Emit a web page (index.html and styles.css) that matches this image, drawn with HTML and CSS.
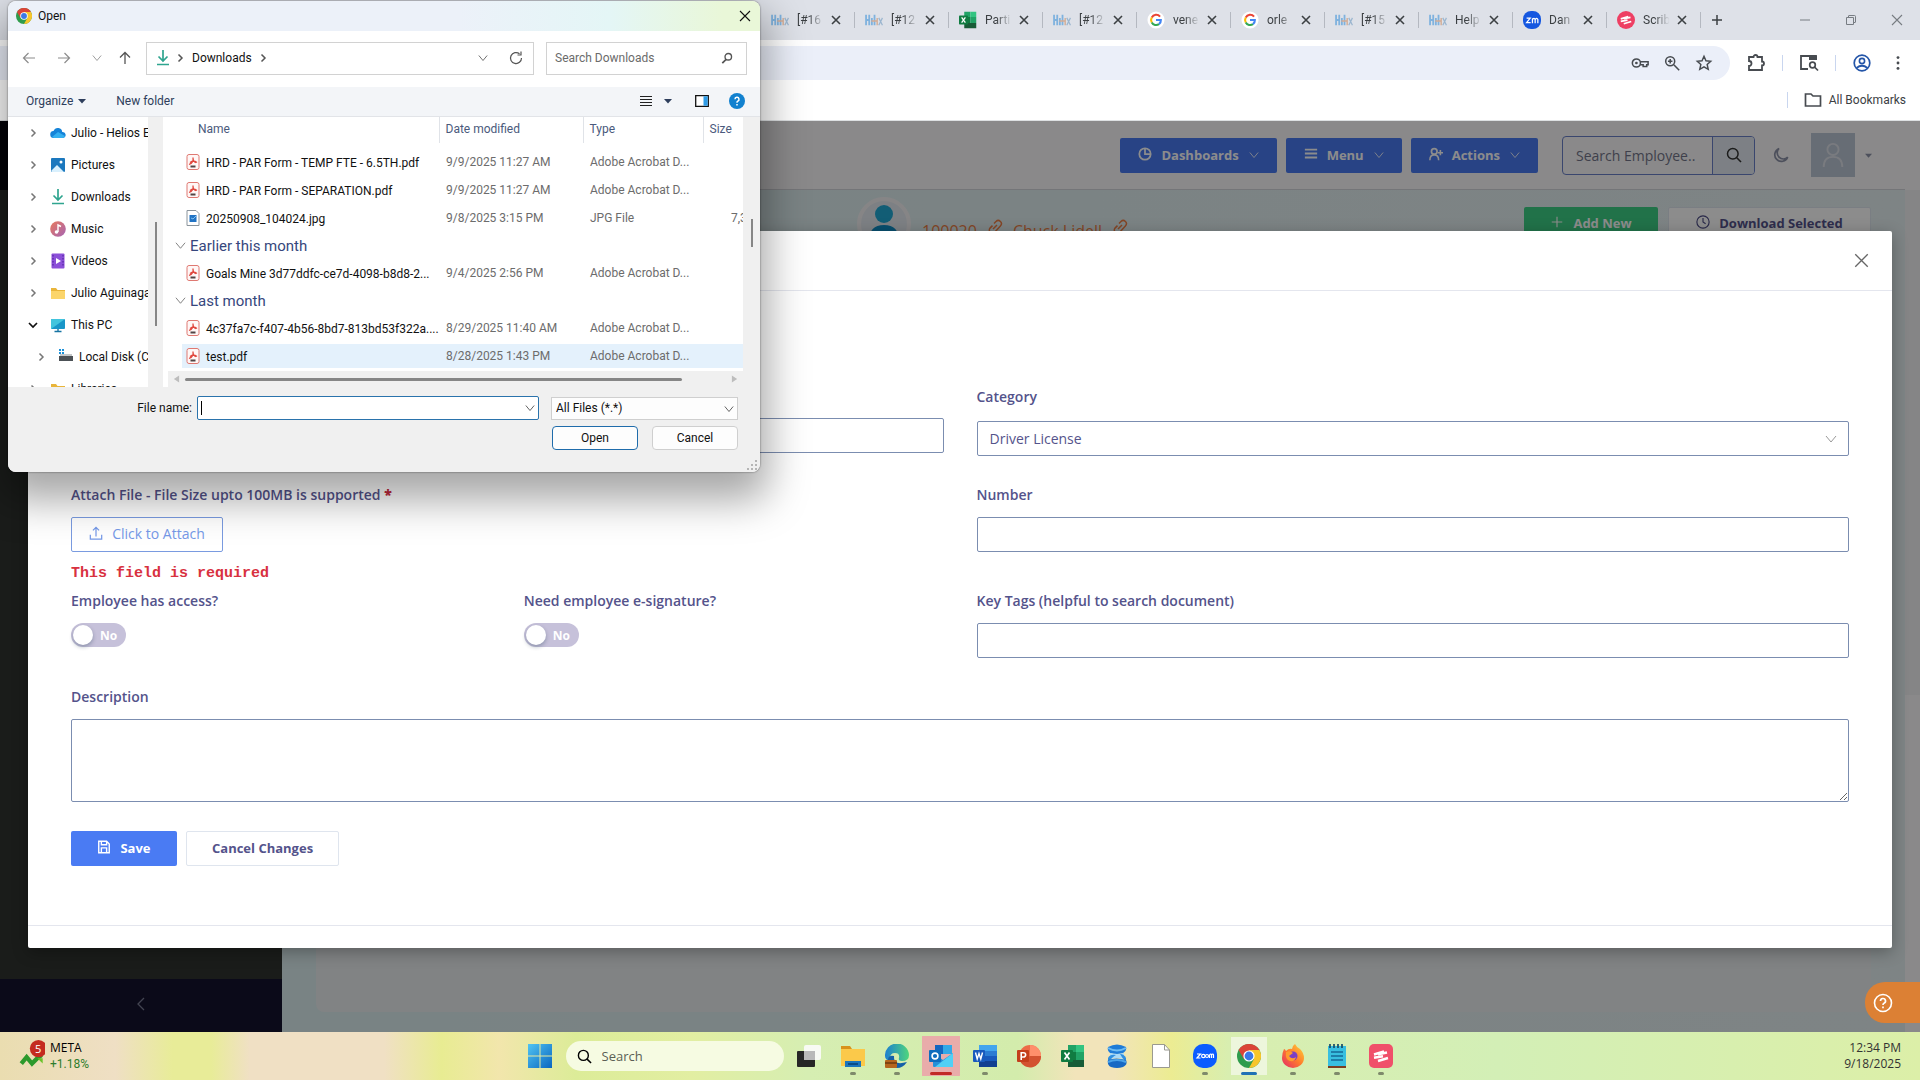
FILE: index.html
```html
<!DOCTYPE html>
<html lang="en">
<head>
<meta charset="UTF-8" />
<meta name="viewport" content="width=device-width, initial-scale=1" />
<title>Employee Documents</title>
<link rel="stylesheet" href="styles.css">
</head>
<body>

  <!-- ICONS -->
  <svg class="sprite" aria-hidden="true">
    <linearGradient id="gSky" x1="0" y1="0" x2="1" y2="1"><stop offset="0" stop-color="#50c4f2"/><stop offset="1" stop-color="#0a66c0"/></linearGradient>
    <linearGradient id="gEdge" x1="0" y1="0" x2="1" y2="0"><stop offset="0" stop-color="#1d7fd0"/><stop offset="1" stop-color="#4fd67c"/></linearGradient>
    <linearGradient id="gFire" x1="1" y1="0" x2="0" y2="1"><stop offset="0" stop-color="#ffd83a"/><stop offset="0.5" stop-color="#ff7a2c"/><stop offset="1" stop-color="#e2286b"/></linearGradient>
    <linearGradient id="gMusic" x1="0" y1="0" x2="1" y2="1"><stop offset="0" stop-color="#e9795c"/><stop offset="1" stop-color="#a564b4"/></linearGradient>
    <symbol id="i-x" viewBox="0 0 12 12"><path d="M2 2l8 8M10 2l-8 8" fill="none" stroke="currentColor" stroke-width="1.6"/></symbol>
    <symbol id="i-thinx" viewBox="0 0 12 12"><path d="M1 1l10 10M11 1L1 11" fill="none" stroke="currentColor" stroke-width="1.1"/></symbol>
    <symbol id="i-down" viewBox="0 0 12 12"><path d="M1 3l5 6 5-6" fill="none" stroke="currentColor" stroke-width="1"/></symbol>
    <symbol id="i-right" viewBox="0 0 12 12"><path d="M4.500 2.500L8 6l-3.500 3.500" fill="none" stroke="currentColor" stroke-width="1.500"/></symbol>
    <symbol id="i-caret" viewBox="0 0 8 8"><path d="M0 2h8L4 6.500z" fill="currentColor"/></symbol>
    <symbol id="i-download" viewBox="0 0 16 16"><path d="M8 0v11M3.500 6.500L8 11l4.500-4.500M2 14.500h12" fill="none" stroke="#2fa58f" stroke-width="1.7"/></symbol>
    <symbol id="i-helios" viewBox="0 0 17 12"><path d="M1 1v10M4 1v10M1 6h3M6.500 4v7M9 1v10" stroke="#7fb2de" stroke-width="1.7"/><path d="M11.500 4v7M6 7h5" stroke="#d3ac94" stroke-width="1.3"/><path d="M13 4l3.500 7M16.500 4L13 11" stroke="#9bb6cf" stroke-width="1.2"/></symbol>
    <symbol id="i-google" viewBox="0 0 20 20"><circle cx="10" cy="10" r="9.500" fill="#fff"/><path d="M14.500 6.300A5.500 5.500 0 0 0 5.300 7.200" fill="none" stroke="#ea4335" stroke-width="2.300"/><path d="M5.300 7.200a5.500 5.500 0 0 0 0 5.600" fill="none" stroke="#fbbc05" stroke-width="2.300"/><path d="M5.300 12.800a5.500 5.500 0 0 0 8 1.800" fill="none" stroke="#34a853" stroke-width="2.300"/><path d="M13.300 14.600A5.500 5.500 0 0 0 15.400 10H10" fill="none" stroke="#4285f4" stroke-width="2.300"/></symbol>
    <symbol id="i-chrome" viewBox="0 0 24 24"><circle cx="12" cy="12" r="12" fill="#2f9c4c"/><path d="M12 12L1.600 6a12 12 0 0 1 20.800 0z" fill="#db4437"/><path d="M12 12V6h10.400A12 12 0 0 1 12 24l5-9z" fill="#f7c52b"/><path d="M1.600 6l5.200 9L12 6z" fill="#db4437"/><circle cx="12" cy="12" r="5.600" fill="#fff"/><circle cx="12" cy="12" r="4.400" fill="#3b78e7"/></symbol>
    <symbol id="i-excel" viewBox="0 0 24 24"><path d="M7 1h8v7H7z" fill="#21a366"/><path d="M15 1h8v7h-8z" fill="#33c481"/><path d="M7 8h8v8H7z" fill="#107c41"/><path d="M15 8h8v8h-8z" fill="#21a366"/><path d="M7 16h16v7H7z" fill="#185c37"/><rect x="0" y="6" width="12" height="12" rx="1" fill="#107c41"/><path d="M3.500 8.500l5 7M8.500 8.500l-5 7" stroke="#fff" stroke-width="1.7"/></symbol>
    <symbol id="i-word" viewBox="0 0 24 24"><path d="M6 1h18v6H6z" fill="#41a5ee"/><path d="M6 7h18v5H6z" fill="#2b7cd3"/><path d="M6 12h18v5H6z" fill="#185abd"/><path d="M6 17h18v6H6z" fill="#103f91"/><rect x="0" y="6" width="12" height="12" rx="1" fill="#185abd"/><path d="M2.500 8.500l1.700 6.500L6 9.500 7.800 15l1.700-6.500" fill="none" stroke="#fff" stroke-width="1.400"/></symbol>
    <symbol id="i-ppt" viewBox="0 0 24 24"><circle cx="13" cy="12" r="11" fill="#ed6c47"/><path d="M13 1a11 11 0 0 1 11 11H13z" fill="#ff8f6b"/><path d="M24 12a11 11 0 0 1-21 5l10-5z" fill="#d35230"/><rect x="0" y="6" width="12" height="12" rx="1" fill="#c43e1c"/><path d="M4.200 16V8.700h2.300a2.100 2.100 0 0 1 0 4.300H4.200" fill="none" stroke="#fff" stroke-width="1.600"/></symbol>
    <symbol id="i-outlook" viewBox="0 0 24 24"><path d="M6 1h17v9H6z" fill="#1466c0"/><path d="M14 1h9v9h-9z" fill="#32a9e7"/><path d="M4 9l10 7 10-7v13a1 1 0 0 1-1 1H5a1 1 0 0 1-1-1z" fill="#2590d8"/><path d="M24 9v14H6z" fill="#50d0f5"/><rect x="0" y="6" width="12" height="12" rx="1" fill="#0f6cbd"/><circle cx="6" cy="12" r="2.900" fill="none" stroke="#fff" stroke-width="1.600"/></symbol>
    <symbol id="i-pdf" viewBox="0 0 14 16"><rect x="1" y="0.500" width="12" height="15" rx="2" fill="#fff7f6" stroke="#df7972"/><path d="M3 10.500c3-1 4.500-4 4-7M4 8.500c2-1.500 5-1.500 7 0M7 4c0 2 1 4 3 4.500" fill="none" stroke="#e0483f" stroke-width="1.300"/><path d="M4.500 12.500h5" stroke="#514444" stroke-width="2"/></symbol>
    <symbol id="i-scribe" viewBox="0 0 24 24"><path d="M5 10.500l10-3M9 10.300l9-1.800M5 13.800l9-1.600M9 17l10-3" fill="none" stroke="#fff" stroke-width="2.400"/></symbol>
    <symbol id="i-link" viewBox="0 0 16 16"><path d="M6 10l4-4M7 4.500l2-2a3 3 0 0 1 4.400 4.400l-5.500 6.100A3 3 0 0 1 3 9.100l2.500-2.500" fill="none" stroke="currentColor" stroke-width="1.500"/></symbol>
    <symbol id="i-folder" viewBox="0 0 16 16"><path d="M1 3h5l1.500 2H15v9H1z" fill="#e9b53a"/><path d="M1 6h14v8H1z" fill="#fbd56b"/></symbol>
    <symbol id="i-search" viewBox="0 0 16 16"><circle cx="6.800" cy="6.800" r="5.300" fill="none" stroke="currentColor" stroke-width="1.500"/><path d="M10.800 10.800l4.200 4.200" stroke="currentColor" stroke-width="1.600"/></symbol>
  </svg>

  <!-- BROWSER -->
  <div class="tabs">
    <div class="tab"><svg class="favicon"><use href="#i-helios"/></svg><span class="tab-title">[#16</span><button class="tab-close" aria-label="Close tab"><svg><use href="#i-x"/></svg></button></div>
    <div class="tab"><svg class="favicon"><use href="#i-helios"/></svg><span class="tab-title">[#12</span><button class="tab-close" aria-label="Close tab"><svg><use href="#i-x"/></svg></button></div>
    <div class="tab"><svg class="favicon"><use href="#i-excel"/></svg><span class="tab-title">Parti</span><button class="tab-close" aria-label="Close tab"><svg><use href="#i-x"/></svg></button></div>
    <div class="tab"><svg class="favicon"><use href="#i-helios"/></svg><span class="tab-title">[#12</span><button class="tab-close" aria-label="Close tab"><svg><use href="#i-x"/></svg></button></div>
    <div class="tab"><svg class="favicon"><use href="#i-google"/></svg><span class="tab-title">vene</span><button class="tab-close" aria-label="Close tab"><svg><use href="#i-x"/></svg></button></div>
    <div class="tab"><svg class="favicon"><use href="#i-google"/></svg><span class="tab-title">orle</span><button class="tab-close" aria-label="Close tab"><svg><use href="#i-x"/></svg></button></div>
    <div class="tab"><svg class="favicon"><use href="#i-helios"/></svg><span class="tab-title">[#15</span><button class="tab-close" aria-label="Close tab"><svg><use href="#i-x"/></svg></button></div>
    <div class="tab"><svg class="favicon"><use href="#i-helios"/></svg><span class="tab-title">Help</span><button class="tab-close" aria-label="Close tab"><svg><use href="#i-x"/></svg></button></div>
    <div class="tab"><svg class="favicon" viewBox="0 0 20 20"><rect width="20" height="20" rx="9" fill="#1557e0"/><path d="M4 8h4l-4 5h4.500M10.500 13.500V8M10.500 9.500q2-2.500 3 0v4M13.500 9.500q2-2.500 3 0v4" fill="none" stroke="#fff" stroke-width="1.400"/></svg><span class="tab-title">Dan</span><button class="tab-close" aria-label="Close tab"><svg><use href="#i-x"/></svg></button></div>
    <div class="tab"><svg class="favicon" viewBox="0 0 24 24"><circle cx="12" cy="12" r="12" fill="#ee3f63"/><use href="#i-scribe"/></svg><span class="tab-title">Scrib</span><button class="tab-close" aria-label="Close tab"><svg><use href="#i-x"/></svg></button></div>
    <button class="new-tab" aria-label="New tab"><svg viewBox="0 0 12 12"><path d="M6 1v10M1 6h10" stroke="#3c4043" stroke-width="1.500"/></svg></button>
    <button class="win-btn" aria-label="Minimize"><svg viewBox="0 0 12 12"><path d="M1 6h10" stroke="#777c82"/></svg></button>
    <button class="win-btn" aria-label="Restore"><svg viewBox="0 0 12 12"><path d="M1.500 3.500h7v7h-7zM3.500 3V2q0-.5.5-.5h5.500q1 0 1 1V8q0 .5-.5.5H9" fill="none" stroke="#777c82"/></svg></button>
    <button class="win-btn" aria-label="Close"><svg><use href="#i-thinx"/></svg></button>
  </div>

  <div class="toolbar">
    <div class="omnibox">
      <svg viewBox="0 0 20 20"><circle cx="6" cy="10" r="4.500" fill="none" stroke="#474b50" stroke-width="1.700"/><circle cx="6" cy="10" r="1.500" fill="#474b50"/><path d="M10 8.500h9V12h-1.500v2h-4v-2H10" fill="none" stroke="#474b50" stroke-width="1.700"/></svg>
      <svg viewBox="0 0 20 20"><circle cx="8" cy="8" r="5" fill="none" stroke="#474b50" stroke-width="1.700"/><path d="M12 12l6 6M8 5.500v5M5.500 8h5" stroke="#474b50" stroke-width="1.700"/></svg>
      <svg viewBox="0 0 20 20"><path d="M10 2.500l2.200 5 5.300.5-4 3.700 1.200 5.300-4.700-2.800L5.300 17l1.200-5.300-4-3.700 5.300-.5z" fill="none" stroke="#474b50" stroke-width="1.600"/></svg>
    </div>
    <svg class="ext" viewBox="0 0 20 20"><path d="M3 4h4.500a2 2 0 0 1 4 0H16v4.500a2 2 0 0 1 0 4V17H3v-4a2.500 2.500 0 0 0 0-5z" fill="none" stroke="#474b50" stroke-width="1.800"/></svg>
    <i class="sep"></i>
    <svg class="ext" viewBox="0 0 20 20"><path d="M9 16H2V3h15v4" fill="none" stroke="#474b50" stroke-width="1.800"/><path d="M10 3h8v4h-8z" fill="#474b50"/><circle cx="13.500" cy="12" r="2.800" fill="none" stroke="#474b50" stroke-width="1.700"/><path d="M15.500 14l3.500 3.500" stroke="#474b50" stroke-width="1.700"/></svg>
    <i class="sep"></i>
    <svg class="ext" viewBox="0 0 20 20"><circle cx="10" cy="10" r="7.800" fill="none" stroke="#2455a8" stroke-width="1.700"/><circle cx="10" cy="8" r="2.600" fill="none" stroke="#2455a8" stroke-width="1.600"/><path d="M4.500 15q5.500-4.500 11 0" fill="none" stroke="#2455a8" stroke-width="1.700"/></svg>
    <svg class="dots" viewBox="0 0 20 20"><circle cx="10" cy="4" r="1.600"/><circle cx="10" cy="10" r="1.600"/><circle cx="10" cy="16" r="1.600"/></svg>
  </div>
  <div class="bookmarks">
    <i class="sep"></i>
    <svg viewBox="0 0 18 16"><path d="M1.500 2h5.500l2 2h7.500v10h-15z" fill="none" stroke="#474b50" stroke-width="1.700"/></svg>
    <span>All Bookmarks</span>
  </div>

  <!-- APP -->
  <div class="app">
    <aside class="sidebar">
      <div class="logo"></div>
      <div class="menu"></div>
      <button class="collapse" aria-label="Collapse menu"><svg viewBox="0 0 12 16"><path d="M9 2L3 8l6 6" fill="none" stroke="#7a7c94" stroke-width="1.300"/></svg></button>
    </aside>
    <div class="content">
      <header class="topbar">
        <button class="btn primary"><svg viewBox="0 0 16 16"><circle cx="8" cy="8" r="6.500" fill="none" stroke="#fff" stroke-width="2"/><path d="M8 2v6h6" fill="none" stroke="#fff" stroke-width="2"/></svg>Dashboards<svg class="arrow"><use href="#i-down"/></svg></button>
        <button class="btn primary"><svg viewBox="0 0 16 16"><path d="M1 3h14M1 7.500h14M1 12h14" stroke="#fff" stroke-width="2.200"/></svg>Menu<svg class="arrow"><use href="#i-down"/></svg></button>
        <button class="btn primary"><svg viewBox="0 0 16 16"><circle cx="6" cy="5" r="3.200" fill="none" stroke="#fff" stroke-width="2"/><path d="M1 15q0-6 5-6t5 6M13 3.500v6M10 6.500h6" fill="none" stroke="#fff" stroke-width="1.800"/></svg>Actions<svg class="arrow"><use href="#i-down"/></svg></button>
        <div class="emp-search">
          <input type="text" placeholder="Search Employee.." aria-label="Search Employee">
          <button aria-label="Search"><svg><use href="#i-search"/></svg></button>
        </div>
        <svg class="moon" viewBox="0 0 16 16"><path d="M6 1.500a6.700 6.700 0 1 0 8.700 8.700A6 6 0 0 1 6 1.500z" fill="none" stroke="#8d92a8" stroke-width="1.700"/></svg>
        <div class="avatar"><svg viewBox="0 0 24 28"><circle cx="12" cy="8" r="6" fill="none" stroke="#dde0e8" stroke-width="2"/><path d="M2 27q0-11 10-11t10 11" fill="none" stroke="#dde0e8" stroke-width="2"/></svg></div>
        <svg class="caret"><use href="#i-caret"/></svg>
      </header>
      <main class="main">
        <div class="emp-row">
          <svg class="emp-photo" viewBox="0 0 54 54"><circle cx="27" cy="27" r="25" fill="#e4eaf0" stroke="#f5f3f5" stroke-width="4"/><circle cx="27" cy="17" r="9" fill="#22a9d6"/><path d="M12 44q0-16 15-16t15 16z" fill="#0f8fc6"/></svg>
          <a href="#">100020</a><svg class="link"><use href="#i-link"/></svg>
          <a href="#">Chuck Lidell</a><svg class="link"><use href="#i-link"/></svg>
          <button class="btn success"><svg viewBox="0 0 16 16"><path d="M8 2v12M2 8h12" stroke="#fff" stroke-width="1.300"/></svg>Add New</button>
          <button class="btn plain"><svg viewBox="0 0 16 16"><circle cx="8" cy="8" r="7" fill="none" stroke="#4b4a85" stroke-width="1.300"/><path d="M8 3.500V8l3 2" fill="none" stroke="#4b4a85" stroke-width="1.300"/></svg>Download Selected</button>
        </div>
        <div class="card"></div>
      </main>
    </div>
    <div class="scroll"><i></i></div>

    <div class="mask"></div>
    <section class="modal">
      <div class="modal-head"><button aria-label="Close"><svg><use href="#i-thinx"/></svg></button></div>
      <form class="modal-body">
        <div class="field"><input type="text" class="control name-control" aria-label="Document name"></div>
        <div class="field">
          <label class="category-label" for="category">Category</label>
          <div class="select">
            <select id="category" class="control"><option>Driver License</option></select>
            <svg><use href="#i-down"/></svg>
          </div>
        </div>
        <div class="field has-error">
          <label for="attach">Attach File - File Size upto 100MB is supported <b class="req">*</b></label>
          <button type="button" id="attach" class="btn attach"><svg viewBox="0 0 16 16"><path d="M8 12V2M4.500 5L8 1.500 11.500 5M1.500 10v5h13v-5" fill="none" stroke="currentColor" stroke-width="1.400"/></svg>Click to Attach</button>
          <p class="error">This field is required</p>
        </div>
        <div class="field has-error">
          <label for="number">Number</label>
          <input type="text" id="number" class="control">
        </div>
        <div class="field split">
          <div>
            <label for="access">Employee has access?</label>
            <span class="switch"><input type="checkbox" id="access"><span>No</span></span>
          </div>
          <div>
            <label for="sign">Need employee e-signature?</label>
            <span class="switch"><input type="checkbox" id="sign"><span>No</span></span>
          </div>
        </div>
        <div class="field">
          <label for="tags">Key Tags (helpful to search document)</label>
          <input type="text" id="tags" class="control">
        </div>
        <div class="field wide">
          <label for="description">Description</label>
          <textarea id="description" class="control"></textarea>
        </div>
        <div class="wide actions">
          <button type="button" class="btn save"><svg viewBox="0 0 16 16"><path d="M2 1.500h9l3 3v10H2zM5 1.500v4h6v-4M5 14.500V9h6v5.500" fill="none" stroke="#fff" stroke-width="1.600"/></svg>Save</button>
          <button type="button" class="btn plain">Cancel Changes</button>
        </div>
      </form>
      <div class="modal-foot"></div>
    </section>

    <button class="help" aria-label="Help"><svg viewBox="0 0 20 20"><circle cx="10" cy="10" r="8.500" fill="none" stroke="#fff" stroke-width="1.600"/><path d="M7.500 8a2.500 2.500 0 1 1 3.500 2.300q-1 .5-1 1.700M10 13.500v1.700" fill="none" stroke="#fff" stroke-width="1.700"/></svg></button>
  </div>

  <!-- TASKBAR -->
  <footer class="taskbar">
    <div class="widget">
      <svg viewBox="0 0 24 28"><path d="M2 22l5-6 5 6 5-5 4-3" fill="none" stroke="#2c9a2c" stroke-width="4"/><path d="M17 17h5v5z" fill="#69c22a"/><circle cx="18" cy="8" r="8" fill="#c42b1f"/></svg>
      <span class="badge">5</span>
      <p>META<br><em>+1.18%</em></p>
    </div>
    <nav class="dock">
      <button aria-label="Start"><svg viewBox="0 0 24 24"><path d="M0 0h11.500v11.500H0zM12.500 0H24v11.500H12.500zM0 12.500h11.500V24H0zM12.500 12.500H24V24H12.500z" fill="url(#gSky)"/></svg></button>
      <label class="os-search"><svg><use href="#i-search"/></svg><input type="text" placeholder="Search"></label>
      <button aria-label="Task view"><svg viewBox="0 0 24 24"><rect x="7" y="1" width="17" height="15" rx="2" fill="#f8faf4"/><rect x="0" y="7" width="18" height="16" rx="1" fill="#262626"/><path d="M7 7h11v9H7z" fill="#b9b9b9"/></svg></button>
      <button class="running" aria-label="File Explorer"><svg viewBox="0 0 24 24"><path d="M0 2h9l2 3H0z" fill="#d8921c"/><path d="M0 5h24v17H0z" fill="#fbc94a"/><path d="M4 17h16v6H4z" fill="#1b76bd"/><path d="M7 20h10" stroke="#0b4d86" stroke-width="2"/></svg></button>
      <button class="running" aria-label="Edge"><svg viewBox="0 0 24 24"><path d="M0 12A12 12 0 0 1 24 11q0 6-7 6-4 0-3-3 1-5-4-5-6 0-5 8Q0 16 0 12z" fill="url(#gEdge)"/><path d="M9 12q-1 10 13 6-4 6-10 6T3 19q-1-9 6-7z" fill="#1560a8"/><rect x="0" y="16" width="12" height="8" rx="1" fill="#b5651d"/><path d="M0 19h12" stroke="#6f3a0e" stroke-width="1.500"/></svg></button>
      <button class="alert" aria-label="Outlook"><svg><use href="#i-outlook"/></svg></button>
      <button class="running" aria-label="Word"><svg><use href="#i-word"/></svg></button>
      <button aria-label="PowerPoint"><svg><use href="#i-ppt"/></svg></button>
      <button aria-label="Excel"><svg><use href="#i-excel"/></svg></button>
      <button aria-label="Database"><svg viewBox="0 0 24 24"><path d="M3 3q9-5 18 0 1 4-3 6-6 2-13 0-3-2-2-6z" fill="#1f7cd8"/><path d="M3 4q9 5 18 0" fill="none" stroke="#6fbcf2" stroke-width="2"/><path d="M5 9q8 2 14 0v6q-7-2-14 0z" fill="#a9daf8"/><path d="M3 14q2-4 8-3-4 2-8 8z" fill="#2f8fe0"/><path d="M21 14q-2-4-6-4 2 4 6 8z" fill="#2f8fe0"/><path d="M3 16q8-3 18 0 2 5-3 7-6 2-12 0-4-2-3-7z" fill="#1769c4"/><path d="M3 18q9-4 18 0" fill="none" stroke="#4aa3ea" stroke-width="2"/></svg></button>
      <button aria-label="Document"><svg viewBox="0 0 24 24"><path d="M3.500.5h12l5 5.500v17.500h-17z" fill="#fff" stroke="#9a9a90"/><path d="M15.500.5V6h5" fill="none" stroke="#9a9a90"/></svg></button>
      <button class="running" aria-label="Zoom"><svg viewBox="0 0 24 24"><rect width="24" height="24" rx="10" fill="#0b5cff"/><path d="M4 10h3.500L4 14h3.500M16.500 14v-3q1.500-2 2 0v3M18.500 11q1.500-2 2 0v3" fill="none" stroke="#fff" stroke-width="1.200"/><circle cx="10.300" cy="12" r="1.700" fill="none" stroke="#fff" stroke-width="1.200"/><circle cx="14" cy="12" r="1.500" fill="none" stroke="#fff" stroke-width="1.200"/></svg></button>
      <button class="current" aria-label="Chrome"><svg><use href="#i-chrome"/></svg></button>
      <button class="running" aria-label="Firefox"><svg viewBox="0 0 24 24"><path d="M3 5q1 0 2 2 3-3 6-2 0-3 3-5 2 4 5 5 4 4 4 9a11 10 0 0 1-22 0q0-5 2-9z" fill="url(#gFire)"/><circle cx="12" cy="12" r="4.500" fill="#7a3fc4"/><path d="M5 8q4-2 7 1l-4 3q3 4 7 1-1 5-6 4t-4-9z" fill="#ff9a2e"/></svg></button>
      <button class="running" aria-label="Notepad"><svg viewBox="0 0 24 24"><rect x="3" y="2" width="18" height="20" fill="#38bfe0"/><path d="M3 22h18v2H3z" fill="#7b3f22"/><path d="M5 0v4M9 0v4M13 0v4M17 0v4" stroke="#174a66" stroke-width="1.700"/><path d="M6 8h12M6 12h12M6 16h12" stroke="#146a96" stroke-width="1.600"/></svg></button>
      <button class="running" aria-label="Scribe"><svg viewBox="0 0 24 24"><rect width="24" height="24" rx="5" fill="#f0506a"/><use href="#i-scribe"/></svg></button>
    </nav>
    <div class="clock">12:34 PM<br>9/18/2025</div>
  </footer>

  <!-- FILE PICKER WINDOW -->
  <div class="picker">
    <div class="picker-title"><svg><use href="#i-chrome"/></svg><span>Open</span><button aria-label="Close"><svg><use href="#i-thinx"/></svg></button></div>
    <div class="picker-nav">
      <svg class="nav-ico dim" viewBox="0 0 14 14"><path d="M13 7H1.500M6.500 2l-5 5 5 5" fill="none" stroke="currentColor" stroke-width="1.200"/></svg>
      <svg class="nav-ico dim" viewBox="0 0 14 14"><path d="M1 7h11.500M7.500 2l5 5-5 5" fill="none" stroke="currentColor" stroke-width="1.200"/></svg>
      <svg class="nav-ico small dim"><use href="#i-down"/></svg>
      <svg class="nav-ico" viewBox="0 0 14 14"><path d="M7 13V1.500M2 6.500l5-5 5 5" fill="none" stroke="currentColor" stroke-width="1.300"/></svg>
      <div class="address">
        <svg class="dl"><use href="#i-download"/></svg><svg><use href="#i-right"/></svg><span>Downloads</span><svg><use href="#i-right"/></svg>
        <svg class="push"><use href="#i-down"/></svg>
        <svg class="refresh" viewBox="0 0 14 14"><path d="M12.500 7A5.500 5.500 0 1 1 10.500 2.800M12 .5v3.500H8.500" fill="none" stroke="currentColor" stroke-width="1.200"/></svg>
      </div>
      <label class="picker-search"><input type="text" placeholder="Search Downloads"><svg viewBox="0 0 14 14"><circle cx="8.500" cy="5.500" r="3.800" fill="none" stroke="currentColor" stroke-width="1.600"/><path d="M6 8.500L1.500 13" stroke="currentColor" stroke-width="2"/></svg></label>
    </div>
    <div class="picker-bar">
      <button>Organize<svg><use href="#i-caret"/></svg></button>
      <button>New folder</button>
      <svg class="view" viewBox="0 0 12 12"><path d="M0 1.500h12M0 4.500h12M0 7.500h12M0 10.500h12" stroke="#222" stroke-width="1.100"/></svg>
      <svg class="tri"><use href="#i-caret"/></svg>
      <svg class="pane" viewBox="0 0 14 12"><path d="M.7.700h12.600v10.600H.7z" fill="#fff" stroke="#111" stroke-width="1.300"/><path d="M8.500 1.300h4.200v9.400H8.500z" fill="#2f9be6"/></svg>
      <svg class="info" viewBox="0 0 16 16"><circle cx="8" cy="8" r="8" fill="#1281cf"/><path d="M6 6.300a2 2 0 1 1 2.700 1.900q-.7.400-.7 1.500M8 11v1.500" fill="none" stroke="#fff" stroke-width="1.500"/></svg>
    </div>
    <div class="picker-body">
      <ul class="tree">
        <li><svg class="exp"><use href="#i-right"/></svg><svg viewBox="0 0 16 16"><path d="M4 13a3.500 3.500 0 0 1-.5-7Q5 2.500 8.500 3t3.700 4A3 3 0 0 1 13 13z" fill="#1583d8"/><path d="M2 12l6-5 7 4q-.5 2-2.500 2H4z" fill="#35b0f0"/></svg><span>Julio - Helios Emp</span></li>
        <li><svg class="exp"><use href="#i-right"/></svg><svg viewBox="0 0 16 16"><rect x="1" y="1" width="14" height="14" rx="1" fill="#1b78be"/><path d="M1 14l6-6 7 7H2z" fill="#d9f0fd"/><circle cx="11" cy="5" r="1.500" fill="#fff"/></svg><span>Pictures</span></li>
        <li><svg class="exp"><use href="#i-right"/></svg><svg><use href="#i-download"/></svg><span>Downloads</span></li>
        <li><svg class="exp"><use href="#i-right"/></svg><svg viewBox="0 0 16 16"><circle cx="8" cy="8" r="7.800" fill="url(#gMusic)"/><path d="M8 11V4l3 1.500" fill="none" stroke="#fff" stroke-width="1.400"/><circle cx="6.500" cy="11" r="1.800" fill="#fff"/></svg><span>Music</span></li>
        <li><svg class="exp"><use href="#i-right"/></svg><svg viewBox="0 0 16 16"><rect x="1.500" y="0.500" width="13" height="15" rx="1" fill="#8b4fd8"/><path d="M3 2v12M13 2v12" stroke="#5b2aa8" stroke-width="1.300" stroke-dasharray="1.500 1.500"/><path d="M6 5l5 3-5 3z" fill="#fff"/></svg><span>Videos</span></li>
        <li><svg class="exp"><use href="#i-right"/></svg><svg><use href="#i-folder"/></svg><span>Julio Aguinaga</span></li>
        <li><svg class="exp open" viewBox="0 0 12 12"><path d="M2 4l4 4 4-4" fill="none" stroke="currentColor" stroke-width="1.700"/></svg><svg viewBox="0 0 16 16"><rect x="1" y="2" width="14" height="10" rx="1" fill="#1996c8"/><path d="M1 2h14L1 12z" fill="#42c4dd"/><path d="M8 12v2.500M4.500 14.500h7" stroke="#1674a3" stroke-width="1.400"/></svg><span>This PC</span></li>
        <li class="child"><svg class="exp"><use href="#i-right"/></svg><svg viewBox="0 0 16 16"><path d="M1 0h2v2H1zM4 0h2v2H4zM1 3h2v2H1zM4 3h2v2H4z" fill="#1a90d9"/><rect x="1" y="7" width="14" height="5" fill="#4c5156"/><path d="M2 6h12" stroke="#b0b5b9" stroke-width="1.500"/></svg><span>Local Disk (C:)</span></li>
        <li><svg class="exp"><use href="#i-right"/></svg><svg><use href="#i-folder"/></svg><span>Libraries</span></li>
      </ul>
      <div class="tree-scroll"><i></i></div>
      <div class="list">
        <table>
          <colgroup><col class="c-pad"><col class="c-name"><col class="c-date"><col class="c-type"><col></colgroup>
          <thead><tr><th></th><th class="first">Name</th><th>Date modified</th><th>Type</th><th>Size</th></tr></thead>
          <tbody>
            <tr><td></td><td class="name"><svg><use href="#i-pdf"/></svg>HRD - PAR Form - TEMP FTE - 6.5TH.pdf</td><td>9/9/2025 11:27 AM</td><td>Adobe Acrobat D...</td><td></td></tr>
            <tr><td></td><td class="name"><svg><use href="#i-pdf"/></svg>HRD - PAR Form - SEPARATION.pdf</td><td>9/9/2025 11:27 AM</td><td>Adobe Acrobat D...</td><td></td></tr>
            <tr><td></td><td class="name"><svg viewBox="0 0 14 16"><path d="M1 .5h9l3 3v12H1z" fill="#fff" stroke="#8a949c"/><path d="M3.500 5h7v7h-7z" fill="#2173c4"/><path d="M5 8l2 1 3-3" stroke="#7fc1f0" fill="none"/></svg>20250908_104024.jpg</td><td>9/8/2025 3:15 PM</td><td>JPG File</td><td class="size">7,3</td></tr>
            <tr class="group"><td colspan="5"><svg><use href="#i-down"/></svg>Earlier this month</td></tr>
            <tr><td></td><td class="name"><svg><use href="#i-pdf"/></svg>Goals Mine 3d77ddfc-ce7d-4098-b8d8-2...</td><td>9/4/2025 2:56 PM</td><td>Adobe Acrobat D...</td><td></td></tr>
            <tr class="group"><td colspan="5"><svg><use href="#i-down"/></svg>Last month</td></tr>
            <tr><td></td><td class="name"><svg><use href="#i-pdf"/></svg>4c37fa7c-f407-4b56-8bd7-813bd53f322a....</td><td>8/29/2025 11:40 AM</td><td>Adobe Acrobat D...</td><td></td></tr>
            <tr class="hover"><td></td><td class="name"><svg><use href="#i-pdf"/></svg>test.pdf</td><td>8/28/2025 1:43 PM</td><td>Adobe Acrobat D...</td><td></td></tr>
          </tbody>
        </table>
        <div class="h-scroll"><svg viewBox="0 0 8 8"><path d="M7 0v8L1 4z"/></svg><i></i><svg viewBox="0 0 8 8"><path d="M1 0v8l6-4z"/></svg></div>
      </div>
      <div class="list-scroll"><i></i></div>
    </div>
    <div class="picker-foot">
      <div class="foot-row">
        <label for="filename">File name:</label>
        <div class="combo"><input type="text" id="filename"><svg><use href="#i-down"/></svg></div>
        <div class="types"><select aria-label="File type"><option>All Files (*.*)</option></select><svg><use href="#i-down"/></svg></div>
      </div>
      <div class="foot-row">
        <button class="default">Open</button>
        <button>Cancel</button>
      </div>
      <svg class="grip" viewBox="0 0 12 12"><path d="M9 1h2v2H9zM9 5h2v2H9zM9 9h2v2H9zM5 5h2v2H5zM5 9h2v2H5zM1 9h2v2H1z" fill="#b5b5b5"/></svg>
    </div>
  </div>

</body>
</html>
```
FILE: styles.css
```css
* {
  margin: 0; padding: 0; box-sizing: border-box;
}

body {
  height: 100vh;
  display: flex;
  flex-direction: column;
  overflow: hidden;
  position: relative;
  font-family: 'Open Sans', sans-serif;
  font-size: 14px;
  background: #fff;
}

button, input, select, textarea {
  font: inherit;
  color: inherit;
}
button {
  background: none;
  border: none;
  cursor: pointer;
}
svg {
  display: block;
  flex: none;
  width: 12px;
  height: 12px;
}
.sprite {
  position: absolute;
  width: 0;
  height: 0;
}
.sep {
  width: 1px;
  height: 16px;
  background: #c9d6ef;
}

/* Browser tabs */
.tabs {
  flex: none;
  display: flex;
  justify-content: flex-end;
  align-items: center;
  height: 40px;
  background: #dee1e8;
  font-family: Roboto, sans-serif;
  font-size: 12px;
  color: #3c4043;
}
.tab {
  width: 94px;
  height: 16px;
  display: flex;
  align-items: center;
  padding-left: 10px;
  border-right: 1px solid #b4b8c0;
}
.favicon {
  width: 18px;
  height: 18px;
}
.tab-title {
  width: 28px;
  margin-left: 8px;
  overflow: hidden;
  white-space: nowrap;
  -webkit-mask-image: linear-gradient(90deg, #000 40%, transparent 95%);
  mask-image: linear-gradient(90deg, #000 40%, transparent 95%);
}
.tab-close {
  margin-left: 5px;
}
.new-tab {
  width: 81px;
  padding-left: 10px;
}
.win-btn {
  width: 46px;
  display: flex;
  justify-content: center;
  color: #777c82;
}

/* Address bar */
.toolbar {
  flex: none;
  display: flex;
  align-items: center;
  height: 46px;
  padding-right: 12px;
}
.omnibox {
  flex: 1;
  height: 34px;
  display: flex;
  justify-content: flex-end;
  align-items: center;
  gap: 14px;
  padding-right: 17px;
  border-radius: 0 17px 17px 0;
  background: #ebeff9;
}
.omnibox svg {
  width: 18px;
  height: 18px;
}
.ext {
  width: 20px;
  height: 20px;
  margin: 0 16px;
}
.dots {
  width: 20px;
  height: 18px;
  fill: #474b50;
}
.bookmarks {
  flex: none;
  display: flex;
  justify-content: flex-end;
  align-items: center;
  height: 35px;
  padding: 0 14px 6px 0;
  font-family: Roboto, sans-serif;
  font-size: 12px;
  color: #3c4043;
  border-bottom: 1px solid #dde0e2;
}
.bookmarks svg {
  width: 18px;
  height: 16px;
  margin: 0 7px 0 16px;
}

/* App behind the modal */
.app {
  flex: 1;
  min-height: 0;
  display: flex;
  position: relative;
  color: #54538b;
}
.sidebar {
  width: 282px;
  display: flex;
  flex-direction: column;
  background: #303331;
}
.logo {
  height: 69px;
  background: #06070f;
}
.menu {
  flex: 1;
}
.collapse {
  height: 53px;
  display: flex;
  justify-content: center;
  align-items: center;
  padding-bottom: 3px;
  background: #15132e;
}
.collapse svg {
  height: 16px;
}
.content {
  flex: 1;
  display: flex;
  flex-direction: column;
}
.topbar {
  height: 69px;
  display: flex;
  justify-content: flex-end;
  align-items: center;
  padding-right: 33px;
  background: #fbfafb;
  border-bottom: 1px solid #d3d6da;
}
.btn {
  height: 35px;
  display: flex;
  justify-content: center;
  align-items: center;
  padding-bottom: 2px;
  border-radius: 2px;
  font-size: 13px;
  font-weight: 700;
}
.btn svg {
  width: 14px;
  height: 14px;
  margin: 0 9px 2px 0;
}
.btn.primary {
  padding: 0 18px;
  margin-right: 9px;
  background: #4a7bf3;
  color: #fff;
}
.btn .arrow {
  width: 10px;
  height: 12px;
  margin: 0 0 0 10px;
}
.emp-search {
  display: flex;
  width: 193px;
  height: 39px;
  margin-left: 15px;
  border: 1px solid #6b80c9;
  border-radius: 4px;
  overflow: hidden;
}
.emp-search input {
  flex: 1;
  min-width: 0;
  padding-left: 13px;
  border: none;
  background: none;
}
.emp-search input::placeholder {
  color: #74768a;
}
.emp-search button {
  width: 42px;
  display: flex;
  justify-content: center;
  align-items: center;
  border-left: 1px solid #6b80c9;
  background: #e3eaf2;
  color: #333;
}
.emp-search svg, .moon {
  width: 16px;
  height: 16px;
}
.moon {
  margin: 0 22px 0 18px;
}
.avatar {
  width: 44px;
  height: 44px;
  display: flex;
  justify-content: center;
  align-items: center;
  background: #bcc7d6;
}
.avatar svg {
  width: 24px;
  height: 26px;
}
.caret {
  width: 7px;
  height: 7px;
  margin-left: 10px;
  color: #8d92a8;
}
.main {
  flex: 1;
  min-height: 0;
  display: flex;
  flex-direction: column;
  padding: 7px 34px 20px;
  background: linear-gradient(90deg, #dceef0, #e6f0f2);
}
.emp-row {
  display: flex;
  align-items: center;
  padding-left: 541px;
  padding-bottom: 40px;
}
.emp-photo {
  width: 54px;
  height: 54px;
  margin-right: 11px;
}
.emp-row a {
  padding-top: 13px;
  color: #ee7f45;
  font-size: 16px;
  text-decoration: none;
}
.link {
  width: 16px;
  height: 16px;
  margin: 6px 10px 0;
  color: #ee7f45;
}
.btn.success {
  width: 134px;
  margin-left: auto;
  background: #3dcf85;
  color: #fff;
}
.btn.plain {
  padding: 0 25px 2px;
  border: 1px solid #dfe5ee;
  background: #fff;
  color: #54538b;
}
.emp-row .btn.plain {
  width: 203px;
  margin-left: 10px;
}
.card {
  flex: 1;
  border-radius: 8px;
  background: #ebeef1;
}
.scroll {
  width: 15px;
  padding: 69px 0 0;
  background: #fbfafb;
}
.scroll i {
  display: block;
  height: 60%;
  background: #f2f2f4;
}
.mask {
  position: absolute;
  inset: 0;
  background: rgba(0, 0, 0, 0.45);
}

/* Modal */
.modal {
  position: absolute;
  top: 110px;
  left: 28px;
  right: 28px;
  background: #fff;
  border-radius: 2px;
  box-shadow: 0 4px 16px rgba(0, 0, 0, 0.3);
}
.modal-head {
  height: 60px;
  display: flex;
  justify-content: flex-end;
  align-items: center;
  padding-right: 23px;
  border-bottom: 1px solid #e4e6ee;
  color: #666;
}
.modal-head svg {
  width: 15px;
  height: 15px;
}
.modal-body {
  display: grid;
  grid-template-columns: 1fr 1fr;
  column-gap: 33px;
  padding: 96px 43px 59px;
}
.field {
  padding-bottom: 29px;
}
.field.has-error {
  padding-bottom: 7px;
}
.field label {
  display: block;
  margin-bottom: 12px;
  line-height: 20px;
  font-size: 14px;
  font-weight: 600;
}
.field .category-label {
  margin-bottom: 14px;
}
.req {
  color: #c0283c;
}
.control {
  display: block;
  width: 100%;
  height: 35px;
  padding: 0 12px;
  border: 1px solid #7b8db0;
  border-radius: 2px;
  background: #fff;
}
.name-control {
  margin-top: 31px;
}
.select {
  position: relative;
}
.select select, .types select {
  appearance: none;
}
.select svg {
  position: absolute;
  right: 12px;
  top: 12px;
  color: #999;
}
.btn.attach {
  width: 152px;
  border: 1px solid #7a9be0;
  background: #fff;
  color: #7599e8;
  font-size: 14px;
  font-weight: 400;
}
.error {
  margin-top: 12px;
  line-height: 20px;
  font-family: 'Liberation Mono', monospace;
  font-size: 15px;
  font-weight: 700;
  color: #d8313f;
}
.split {
  display: grid;
  grid-template-columns: 1fr 1fr;
  column-gap: 33px;
}
.switch {
  display: flex;
  align-items: center;
  position: relative;
  width: 55px;
  height: 24px;
  border-radius: 12px;
  background: #c6c1da;
}
.switch input {
  appearance: none;
  width: 20px;
  height: 20px;
  margin: 0 7px 0 2px;
  border-radius: 50%;
  background: #fff;
  box-shadow: 0 2px 4px rgba(0, 35, 60, 0.3);
}
.switch span {
  color: #fff;
  font-size: 12px;
  font-weight: 700;
}
.wide {
  grid-column: 1 / -1;
}
textarea.control {
  height: 83px;
}
.actions {
  display: flex;
  gap: 9px;
}
.btn.save {
  width: 106px;
  background: #4a7bf3;
  color: #fff;
}
.modal-foot {
  height: 23px;
  border-top: 1px solid #e4e6ee;
}
.help {
  position: absolute;
  right: 0;
  bottom: 9px;
  width: 55px;
  height: 41px;
  padding-left: 8px;
  border-radius: 20px 0 0 20px;
  background: #dc8034;
}
.help svg {
  width: 20px;
  height: 20px;
}

/* Taskbar */
.taskbar {
  flex: none;
  height: 48px;
  display: grid;
  grid-template-columns: 1fr auto 1fr;
  align-items: center;
  font-size: 12px;
  line-height: 16px;
  background: linear-gradient(90deg, #eaddb0, #efdfc4 6%, #e8ec98 9%, #e8ec98 11%, #f0e0c4 13%, #f0e0c4 20%, #e8ec92 23%, #f2e6ac 26%, #dcec98 30%, #e2eea2 36%, #d6eeb2 42%, #d3ecac 53%, #f2e4ba 56%, #f2e4ba 58%, #ecec92 61%, #d8eeb0 64%, #d3efb6 78%, #dcefa8);
}
.widget {
  display: flex;
  position: relative;
  padding-left: 19px;
}
.widget svg {
  width: 26px;
  height: 30px;
}
.widget .badge {
  position: absolute;
  left: 35px;
  top: 1px;
  color: #fff;
  font-size: 11px;
}
.widget p {
  margin-left: 5px;
}
.widget em {
  font-family: Roboto, sans-serif;
  font-style: normal;
  color: #2d7d2d;
}
.dock {
  display: flex;
  align-items: center;
}
.dock button {
  width: 44px;
  height: 40px;
  display: flex;
  justify-content: center;
  align-items: center;
  position: relative;
  border-radius: 4px;
}
.dock button svg {
  width: 24px;
  height: 24px;
}
.dock .running::after, .dock .current::after, .dock .alert::after {
  content: '';
  position: absolute;
  left: 19px;
  bottom: 1px;
  width: 6px;
  height: 3px;
  border-radius: 2px;
  background: #7e8a6b;
}
.dock .current {
  background: linear-gradient(#edf6dc, #edf6dc) center / 36px 38px no-repeat;
}
.dock .current::after {
  left: 14px;
  width: 16px;
  background: #1f72b5;
}
.dock .alert {
  background: linear-gradient(#e9acaa, #e9acaa) center / 38px 40px no-repeat;
}
.dock .alert::after {
  left: 11px;
  width: 22px;
  background: #c12a26;
}
.os-search {
  display: flex;
  align-items: center;
  width: 218px;
  height: 30px;
  margin: 0 3px 0 4px;
  padding-left: 11px;
  border-radius: 15px;
  background: #f6fbe2;
}
.os-search svg {
  width: 15px;
  height: 15px;
}
.os-search input {
  width: 150px;
  margin-left: 10px;
  border: none;
  background: none;
  font-size: 13px;
}
.os-search input::placeholder {
  color: #5b5f55;
}
.clock {
  padding-right: 19px;
  text-align: right;
  color: #333;
}

/* File picker window */
.picker {
  position: absolute;
  top: 1px;
  left: 8px;
  width: 752px;
  border-radius: 8px;
  overflow: hidden;
  background: #fff;
  box-shadow: 0 0 2px rgba(0, 0, 0, 0.6), 0 20px 40px 8px rgba(0, 0, 0, 0.35);
  font-family: Roboto, sans-serif;
  font-size: 12px;
  color: #111;
}
.picker-title {
  display: flex;
  align-items: center;
  height: 30px;
  padding: 0 9px 0 8px;
  background: linear-gradient(90deg, #ecf1f9 60%, #e4f6f6 80%, #e9f7d8 95%);
}
.picker-title svg {
  width: 16px;
  height: 16px;
}
.picker-title span {
  margin: 0 auto 0 6px;
}
.picker-title button svg {
  width: 12px;
  height: 12px;
}
.picker-nav {
  display: flex;
  align-items: center;
  height: 56px;
  padding: 0 13px 2px 14px;
  color: #555;
}
.nav-ico {
  width: 14px;
  height: 14px;
  margin-right: 21px;
}
.nav-ico.small {
  width: 10px;
  margin-right: 16px;
}
.nav-ico:nth-child(4) {
  margin-right: 14px;
}
.dim {
  color: #8c8c8c;
}
.address, .picker-search {
  display: flex;
  align-items: center;
  height: 33px;
  border: 1px solid #d2d2d2;
}
.address {
  flex: 1;
  padding: 0 10px 0 8px;
}
.address .dl {
  width: 16px;
  height: 16px;
  margin-right: 3px;
}
.address span {
  margin: 0 5px 0 6px;
  color: #111;
}
.address .push {
  width: 10px;
  margin-left: auto;
}
.address .refresh {
  width: 14px;
  height: 14px;
  margin-left: 21px;
}
.picker-search {
  width: 201px;
  margin-left: 12px;
  padding: 0 13px 0 8px;
}
.picker-search input {
  flex: 1;
  min-width: 0;
  border: none;
}
.picker-search input::placeholder {
  color: #6b6b6b;
}
.picker-bar {
  display: flex;
  align-items: center;
  height: 30px;
  padding: 0 15px 1px 18px;
  background: #f3f5f8;
  border-bottom: 1px solid #e2e4e8;
  color: #2e3e5c;
}
.picker-bar button {
  display: flex;
  align-items: center;
  margin-right: 30px;
}
.picker-bar button svg {
  width: 8px;
  height: 8px;
  margin-left: 5px;
}
.picker-bar .view {
  margin-left: auto;
}
.picker-bar .tri {
  width: 8px;
  height: 8px;
  margin: 0 23px 0 12px;
}
.picker-bar .pane {
  width: 14px;
  height: 12px;
  margin-right: 20px;
}
.picker-bar .info {
  width: 16px;
  height: 16px;
}
.picker-body {
  display: flex;
  height: 270px;
}
.tree {
  width: 140px;
  overflow: hidden;
  list-style: none;
}
.tree li {
  display: flex;
  align-items: center;
  height: 32px;
  padding-left: 19px;
  white-space: nowrap;
}
.tree li.child {
  padding-left: 27px;
}
.tree svg {
  width: 16px;
  height: 16px;
  margin-right: 5px;
}
.tree .exp {
  width: 12px;
  height: 12px;
  margin-right: 11px;
  color: #777;
}
.tree .exp.open {
  color: #111;
}
.tree-scroll {
  width: 15px;
  padding: 105px 0 0 7px;
  background: #f0f0f0;
}
.tree-scroll i, .list-scroll i {
  display: block;
  width: 2px;
  height: 104px;
  background: #868686;
}
.list {
  flex: 1;
  min-width: 0;
  display: flex;
  flex-direction: column;
  justify-content: space-between;
  padding-left: 5px;
}
.list table {
  width: 100%;
  table-layout: fixed;
  border-collapse: collapse;
}
.c-pad {
  width: 14px;
}
.c-name {
  width: 257px;
}
.c-date {
  width: 144px;
}
.c-type {
  width: 120px;
}
.list th {
  height: 26px;
  padding: 0 0 2px 6px;
  border-left: 1px solid #e0e3e8;
  text-align: left;
  font-weight: 400;
  color: #4a5a7c;
}
.list th:first-child, .list th.first {
  border-left: none;
}
.list th.first {
  padding-left: 16px;
}
.list tbody::before {
  content: '';
  display: block;
  height: 5px;
}
.list td {
  height: 28px;
  padding-left: 7px;
  overflow: hidden;
  white-space: nowrap;
  color: #6c6c6c;
}
.list td.name {
  padding-left: 4px;
  color: #111;
}
.list td.size {
  padding-left: 28px;
}
.name svg {
  display: inline-block;
  width: 14px;
  height: 16px;
  margin-right: 6px;
  vertical-align: -3px;
}
.list .group td {
  height: 27px;
  font-size: 15px;
  color: #36477d;
}
.group svg {
  display: inline-block;
  width: 11px;
  height: 11px;
  margin-right: 4px;
  color: #777;
}
.hover td:not(:first-child) {
  background: linear-gradient(#e4f1fc, #e4f1fc) center / 100% 24px no-repeat;
}
.h-scroll {
  display: flex;
  align-items: center;
  height: 16px;
  padding: 0 5px;
  background: #f0f0f0;
}
.h-scroll svg {
  width: 7px;
  height: 8px;
  fill: #bdbdbd;
}
.h-scroll i {
  width: 497px;
  height: 3px;
  margin: 0 auto 0 5px;
  border-radius: 2px;
  background: #868686;
}
.list-scroll {
  width: 17px;
  padding: 102px 0 0 8px;
  background: #f0f0f0;
}
.list-scroll i {
  height: 28px;
}
.picker-foot {
  display: flex;
  flex-direction: column;
  gap: 6px;
  height: 85px;
  padding: 9px 22px 0 0;
  position: relative;
  background: #f0f0f0;
}
.foot-row {
  display: flex;
  justify-content: flex-end;
  align-items: center;
}
.combo, .types {
  position: relative;
}
.combo {
  width: 342px;
  margin: 0 12px 0 5px;
}
.combo input {
  display: block;
  width: 100%;
  height: 24px;
  border: 1px solid #2a73ac;
  border-radius: 2px;
  /* text cursor */
  background: linear-gradient(#000, #000) 3px 50% / 1px 14px no-repeat #fff;
}
.types {
  width: 187px;
}
.types select {
  display: block;
  width: 100%;
  height: 23px;
  padding-left: 4px;
  border: 1px solid #cfcfcf;
  background: #fdfdfd;
}
.combo svg, .types svg {
  position: absolute;
  right: 4px;
  top: 7px;
  width: 10px;
  height: 10px;
  color: #444;
}
.foot-row button {
  width: 86px;
  height: 24px;
  margin-left: 14px;
  border: 1px solid #cfcfcf;
  border-radius: 4px;
  background: #fdfdfd;
}
.foot-row .default {
  border-color: #1f6cab;
}
.grip {
  position: absolute;
  right: 2px;
  bottom: 1px;
}
```
